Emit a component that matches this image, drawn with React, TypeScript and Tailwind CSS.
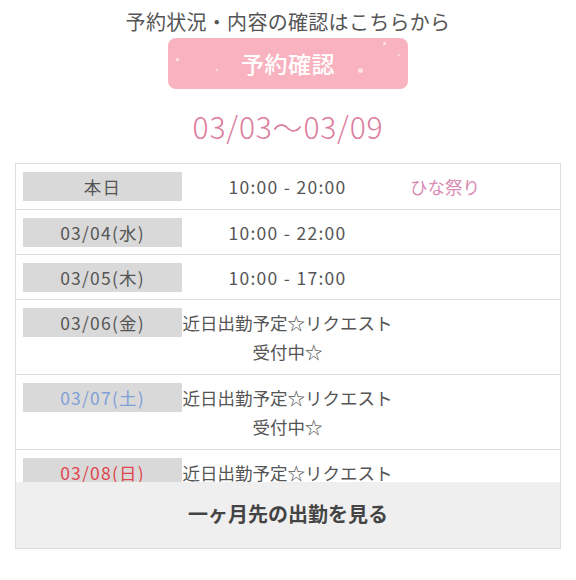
import React from "react";

type Row = {
  date: string;
  dateColor: string;
  lines: string[];
  note?: string;
  numeric?: boolean;
  pb: string;
};

const rows: Row[] = [
  { date: "本日", dateColor: "text-[#555555]", lines: ["10:00 - 20:00"], note: "ひな祭り", numeric: true, pb: "pb-[8px]" },
  { date: "03/04(水)", dateColor: "text-[#555555]", lines: ["10:00 - 22:00"], numeric: true, pb: "pb-[7px]" },
  { date: "03/05(木)", dateColor: "text-[#555555]", lines: ["10:00 - 17:00"], numeric: true, pb: "pb-[7px]" },
  { date: "03/06(金)", dateColor: "text-[#555555]", lines: ["近日出勤予定☆リクエスト", "受付中☆"], pb: "pb-[8px]" },
  { date: "03/07(土)", dateColor: "text-[#7f9fd8]", lines: ["近日出勤予定☆リクエスト", "受付中☆"], pb: "pb-[8px]" },
  { date: "03/08(日)", dateColor: "text-[#e0454d]", lines: ["近日出勤予定☆リクエスト", "受付中☆"], pb: "pb-[8px]" },
];

export default function App() {
  return (
    <div
      className="w-[576px] h-[580px] bg-white overflow-hidden"
      style={{ fontFamily: '"Noto Sans CJK JP", "Noto Sans", sans-serif' }}
    >
      <div className="pt-[8px] flex flex-col items-center">
        <div className="text-[20px] leading-[28px] text-[#555555] tracking-[0.3px]">
          予約状況・内容の確認はこちらから
        </div>
        <div className="relative mt-[2px] w-[240px] h-[51px] rounded-[8px] bg-[#f9b3c0] flex items-center justify-center">
          <span className="text-white text-[23px] leading-none font-medium tracking-[0.5px]">予約確認</span>
          <span className="absolute left-[8px] top-[20px] w-[3px] h-[3px] rounded-full bg-white/70" />
          <span className="absolute left-[48px] top-[31px] w-[2px] h-[2px] rounded-full bg-white/70" />
          <span className="absolute left-[190px] top-[30px] w-[5px] h-[5px] rounded-full bg-white/60" />
          <span className="absolute left-[215px] top-[4px] w-[3px] h-[3px] rounded-full bg-white/70" />
          <span className="absolute left-[230px] top-[16px] w-[2px] h-[2px] rounded-full bg-white/60" />
        </div>
        <div className="mt-[19px] text-[30px] leading-[36px] font-light text-[#dc7c9e] tracking-[0.8px]">
          03/03〜03/09
        </div>
      </div>

      <div className="mt-[19px] mx-[15px] w-[546px] border border-[#dddddd]">
        <div className="h-[318px] overflow-hidden">
          {rows.map((r, i) => (
            <div key={i} className={`flex items-start pt-[8px] ${r.pb} pl-[7px] border-b border-[#dddddd]`}>
              <div
                className={`w-[159px] h-[29px] shrink-0 bg-[#d9d9d9] flex items-center justify-center text-[17.5px] leading-[29px] tracking-[1.2px] ${r.dateColor}`}
              >
                {r.date}
              </div>
              <div
                className={`w-[211px] shrink-0 text-center text-[17.5px] leading-[29px] text-[#555555] ${
                  r.numeric ? "tracking-[1.3px]" : ""
                }`}
              >
                {r.lines.map((l, j) => (
                  <div key={j}>{l}</div>
                ))}
              </div>
              {r.note && (
                <div className="pl-[17px] text-[17.5px] leading-[29px] text-[#d98ab2]">{r.note}</div>
              )}
            </div>
          ))}
        </div>
        <div className="h-[66px] bg-[#efefef] flex items-center justify-center pb-[2px]">
          <span className="text-[20px] font-bold text-[#444444]">一ヶ月先の出勤を見る</span>
        </div>
      </div>
    </div>
  );
}
